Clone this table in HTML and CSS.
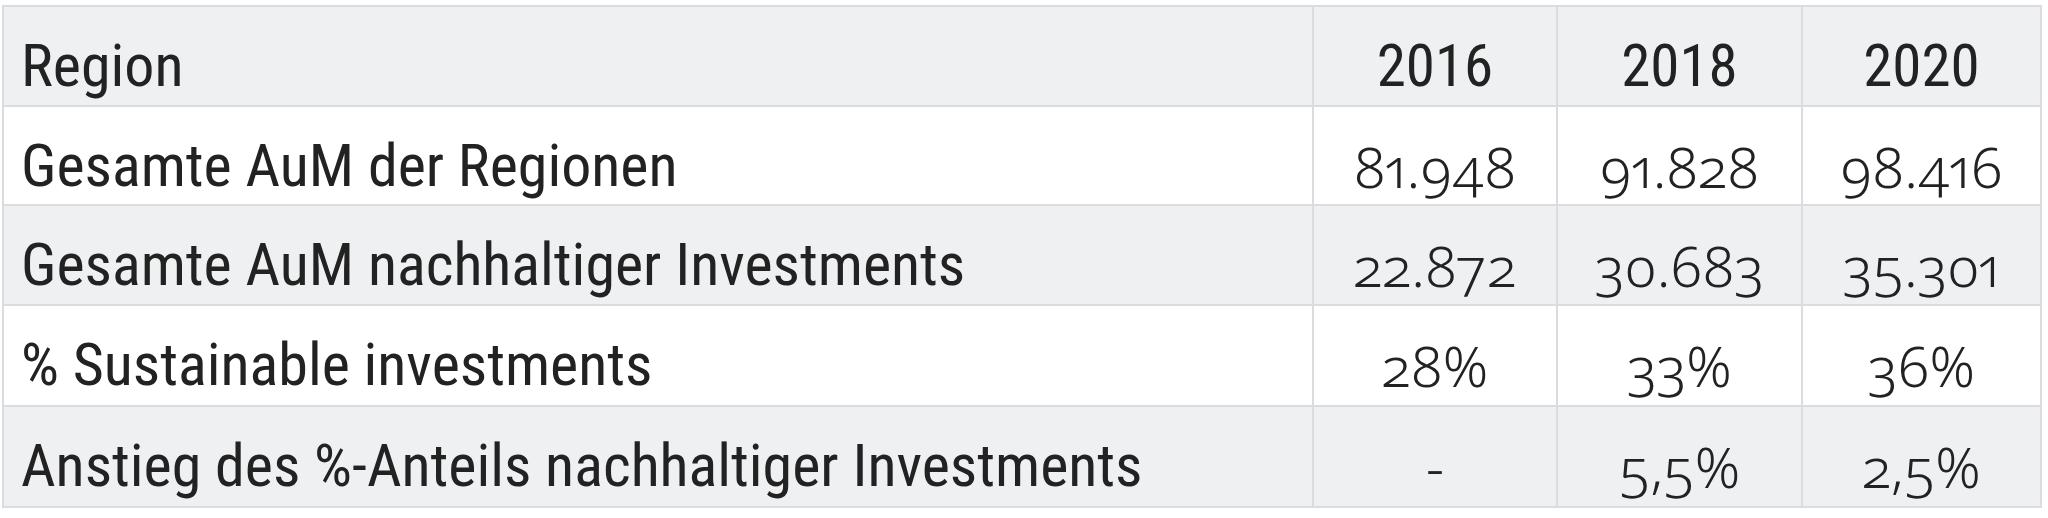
FILE: index.html
```html
<!DOCTYPE html>
<html lang="de">
<head>
<meta charset="utf-8">
<title>Nachhaltige Investments nach Region</title>
<link rel="stylesheet" href="styles.css">
</head>
<body>
<div class="page">
  <div class="table" role="table">
    <div class="cell head label">Region</div>
    <div class="cell head year">2016</div>
    <div class="cell head year">2018</div>
    <div class="cell head year">2020</div>

    <div class="cell label">Gesamte AuM der Regionen</div>
    <div class="cell num">81.948</div>
    <div class="cell num">91.828</div>
    <div class="cell num">98.416</div>

    <div class="cell alt label">Gesamte AuM nachhaltiger Investments</div>
    <div class="cell alt num">22.872</div>
    <div class="cell alt num">30.683</div>
    <div class="cell alt num">35.301</div>

    <div class="cell label">% Sustainable investments</div>
    <div class="cell num">28%</div>
    <div class="cell num">33%</div>
    <div class="cell num">36%</div>

    <div class="cell alt label">Anstieg des %-Anteils nachhaltiger Investments</div>
    <div class="cell alt num">-</div>
    <div class="cell alt num">5,5%</div>
    <div class="cell alt num">2,5%</div>
  </div>
</div>
</body>
</html>
```
FILE: styles.css
```css
html, body {
  margin: 0;
  padding: 0;
  background: #ffffff;
}

.page {
  padding: 5px 6px 10px 2px;
}

.table {
  display: grid;
  grid-template-columns: 1308px 242px 243px 237px;
  grid-template-rows: 98px 97px 98px 99px 99px;
  gap: 2px;
  padding: 2px;
  width: 2036px;
  background: #dadcdf;
  color: #222222;
}

.cell {
  background: #ffffff;
  padding-top: 24px;
  line-height: 70px;
  white-space: nowrap;
  overflow: hidden;
}

.head,
.alt {
  background: #eef0f2;
}

.label {
  font-family: "Roboto Condensed", Roboto, "Liberation Sans", sans-serif;
  font-size: 60px;
  font-weight: 400;
  padding-left: 17px;
}

.year {
  font-family: "Roboto Condensed", Roboto, "Liberation Sans", sans-serif;
  font-size: 59px;
  font-weight: 400;
  text-align: center;
}

.num {
  font-family: "Noto Sans", "DejaVu Sans", sans-serif;
  font-feature-settings: "onum" 1, "pnum" 1;
  font-size: 56px;
  font-weight: 300;
  text-align: center;
}
```
